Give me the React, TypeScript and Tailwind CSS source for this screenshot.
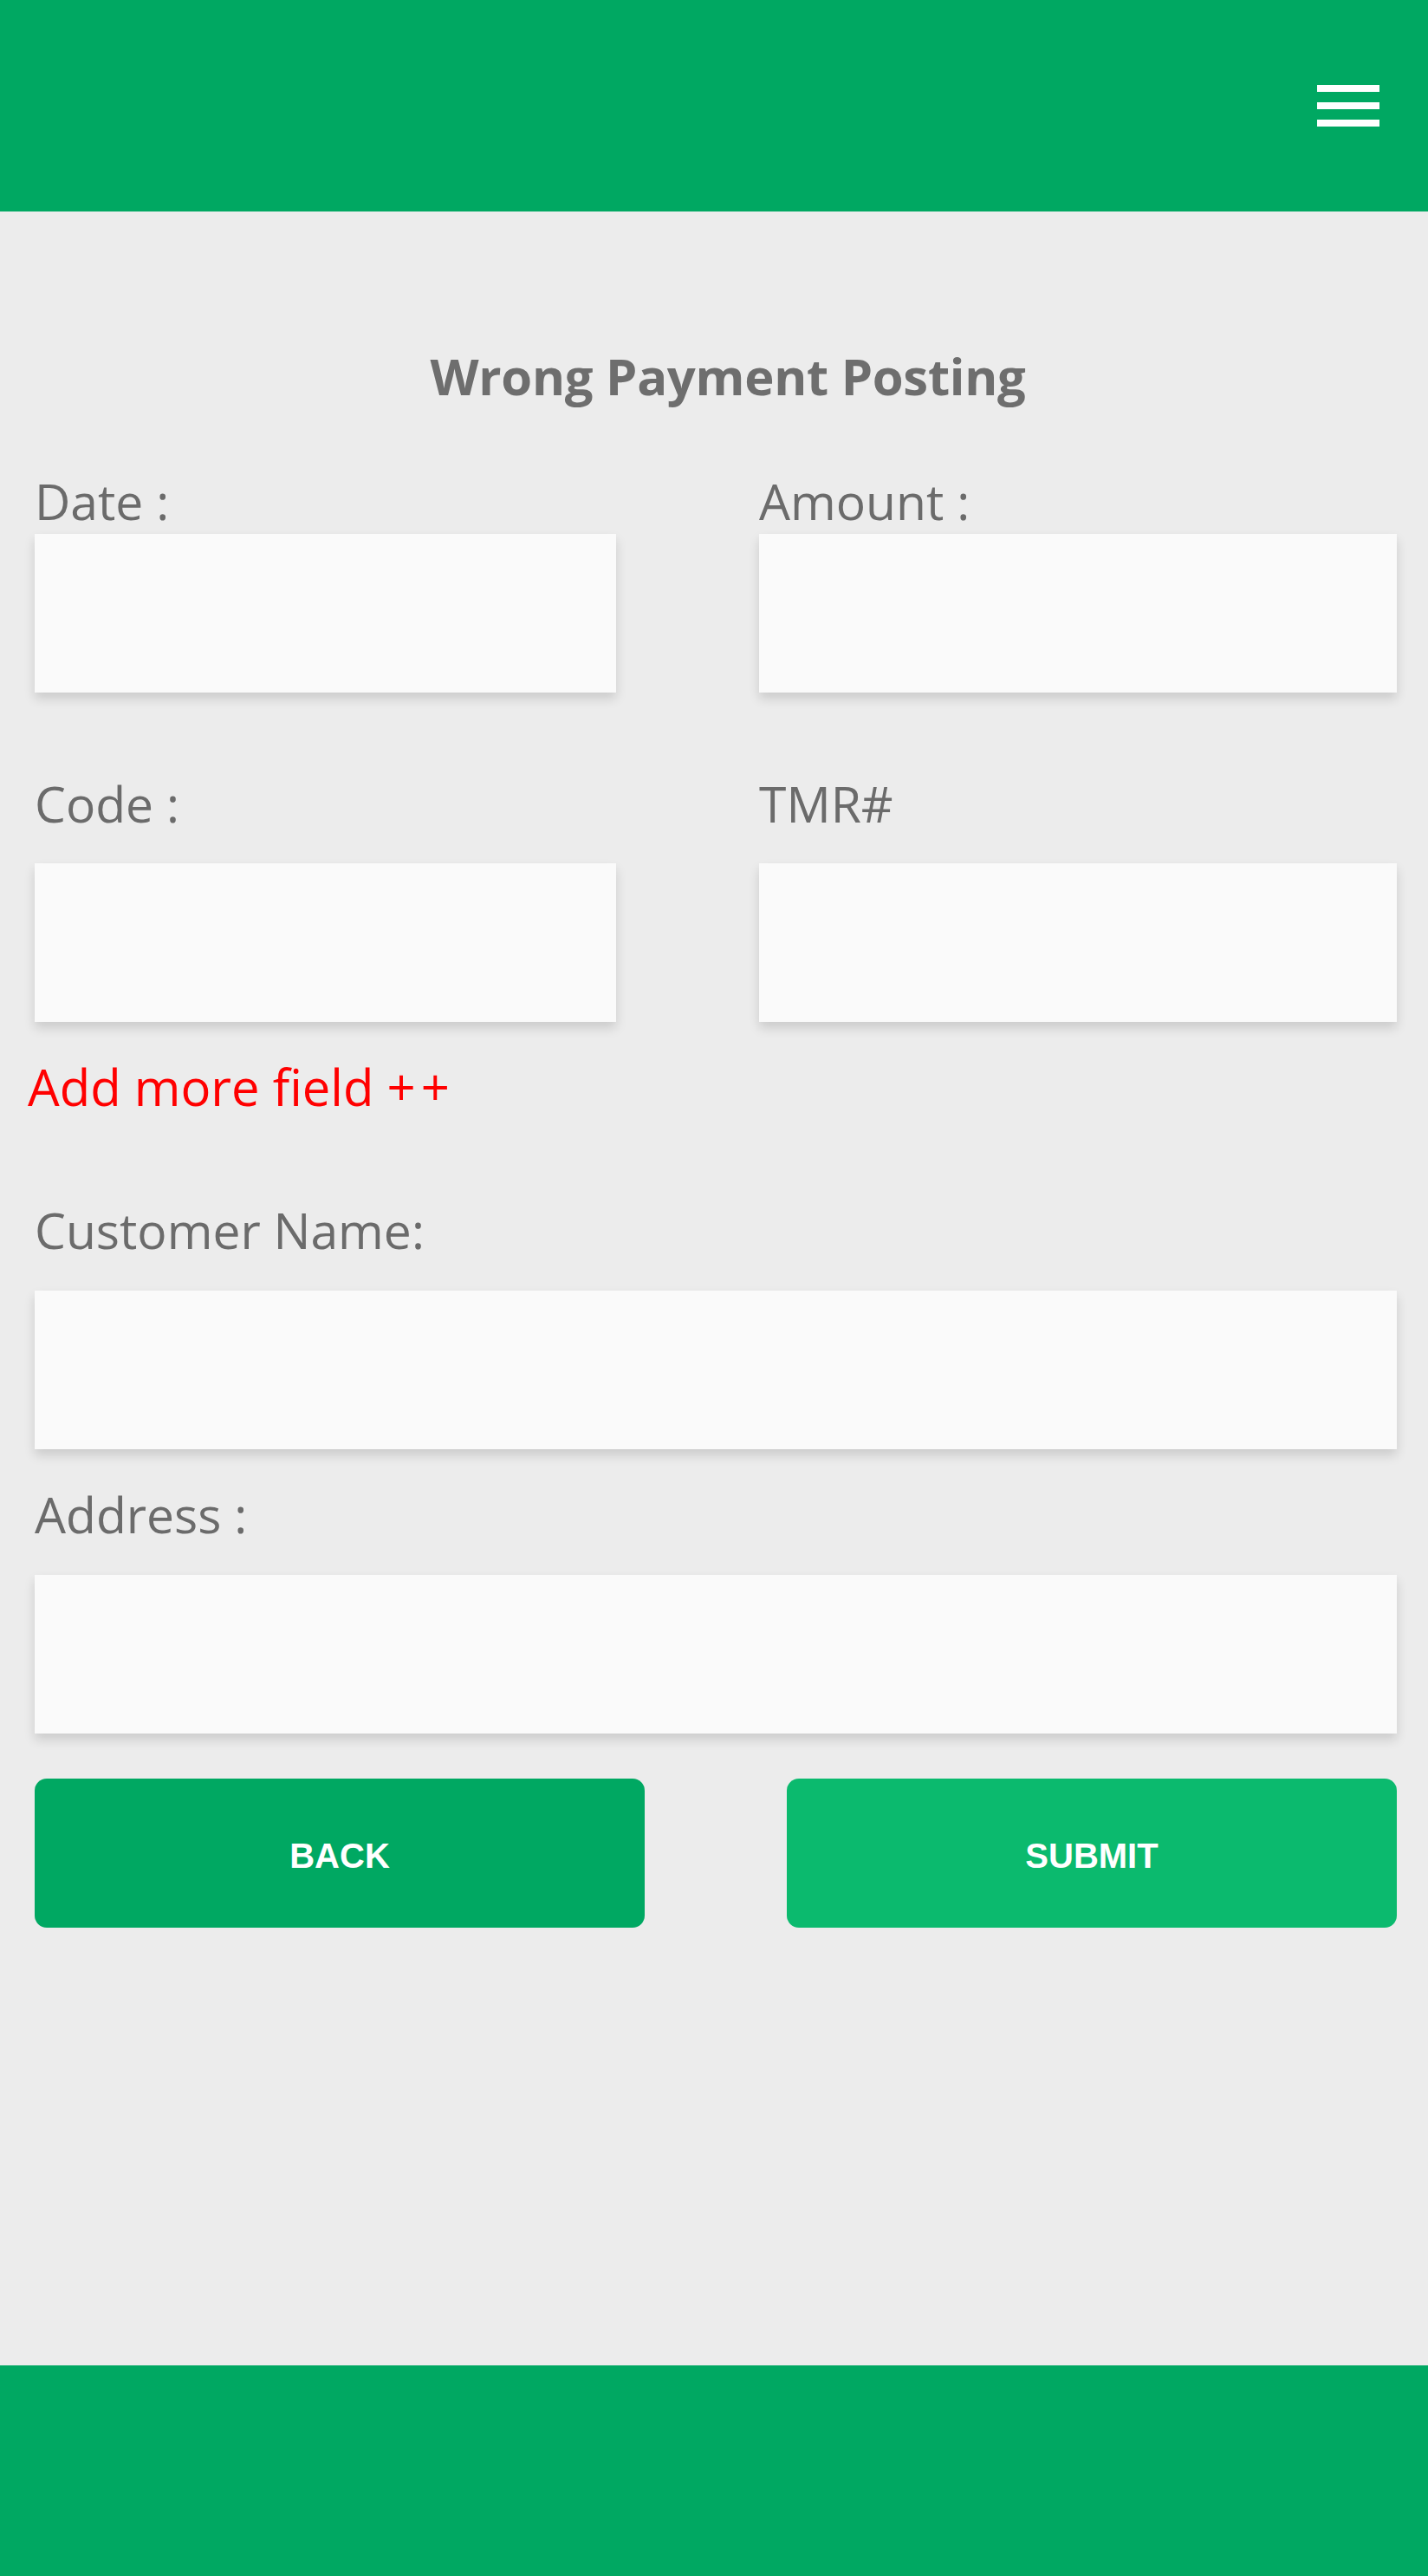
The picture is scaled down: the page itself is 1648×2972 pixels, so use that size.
import React from "react";

const labelCls =
  "block text-[57px] leading-[64px] font-[370] text-[#6b6b6b] whitespace-nowrap";
const inputCls =
  "block w-full h-[183px] bg-[#fafafa] shadow-[0_7px_12px_rgba(0,0,0,0.14)] outline-none border-0";

export default function App() {
  return (
    <div
      className="min-h-[2972px] w-full flex flex-col bg-[#ececec]"
      style={{ fontFamily: '"Open Sans", "Noto Sans", sans-serif' }}
    >
      <header className="h-[244px] bg-[#00a862] flex items-center justify-end pr-[56px] shrink-0">
        <button className="flex flex-col gap-[12px] w-[72px]" aria-label="menu">
          <span className="block h-[8px] w-[72px] bg-white" />
          <span className="block h-[8px] w-[72px] bg-white" />
          <span className="block h-[8px] w-[72px] bg-white" />
        </button>
      </header>

      <main className="flex-1 pt-[158px] pl-[40px] pr-[36px]">
        <h1 className="text-center pl-[28px] text-[58px] leading-[64px] font-bold text-[#6e6e6e] tracking-[-0.3px]">
          Wrong Payment Posting
        </h1>

        <div className="mt-[80px] grid grid-cols-[671px_736px] gap-x-[165px]">
          <div>
            <label className={labelCls}>Date :</label>
            <input className={inputCls + " mt-[6px]"} />
          </div>
          <div>
            <label className={labelCls}>Amount :</label>
            <input className={inputCls + " mt-[6px]"} />
          </div>
        </div>

        <div className="mt-[96px] grid grid-cols-[671px_736px] gap-x-[165px]">
          <div>
            <label className={labelCls}>Code :</label>
            <input className={inputCls + " mt-[37px]"} />
          </div>
          <div>
            <label className={labelCls}>TMR#</label>
            <input className={inputCls + " mt-[37px]"} />
          </div>
        </div>

        <div className="mt-[43px] -ml-[8px] text-[58px] leading-[64px] font-[370] text-[#ff0000] whitespace-nowrap">
          Add more field <span className="tracking-[6px]">++</span>
        </div>

        <div className="mt-[101px]">
          <label className={labelCls}>Customer Name:</label>
          <input className={inputCls + " mt-[38px]"} />
        </div>

        <div className="mt-[43px]">
          <label className={labelCls}>Address :</label>
          <input className={inputCls + " mt-[38px]"} />
        </div>

        <div className="mt-[52px] grid grid-cols-[704px_704px] gap-x-[164px]">
          <button
            className="h-[172px] pt-[5px] rounded-[14px] bg-[#00a862] text-white text-[40px] font-bold"
            style={{ fontFamily: '"Liberation Sans", Arial, sans-serif' }}
          >
            BACK
          </button>
          <button
            className="h-[172px] pt-[5px] rounded-[14px] bg-[#0bba6e] text-white text-[40px] font-bold"
            style={{ fontFamily: '"Liberation Sans", Arial, sans-serif' }}
          >
            SUBMIT
          </button>
        </div>
      </main>

      <footer className="h-[243px] bg-[#00a862] shrink-0" />
    </div>
  );
}
